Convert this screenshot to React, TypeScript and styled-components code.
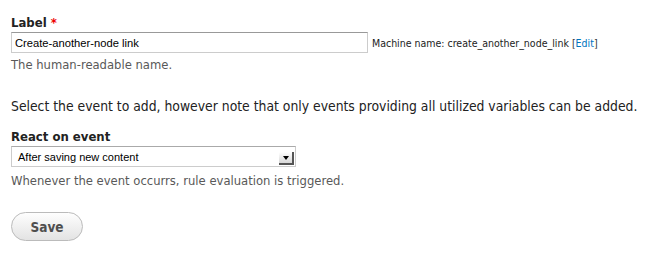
import React from "react";
import styled, { createGlobalStyle } from "styled-components";

const Global = createGlobalStyle`
  body { margin: 0; background: #fff; font-family: "DejaVu Sans Condensed", "DejaVu Sans", sans-serif; color: #333; }
`;

const Page = styled.div`
  padding: 14px 11px;
  display: flex;
  flex-direction: column;
`;

const FormItem = styled.div<{ $mb?: number }>`
  display: flex;
  flex-direction: column;
  margin-bottom: ${(p) => p.$mb ?? 0}px;
`;

const Label = styled.label`
  font-weight: bold;
  font-size: 13px;
  color: #222;
  height: 18px;
  line-height: 18px;
`;

const Req = styled.span`
  color: #e00;
`;

const Row = styled.div`
  display: flex;
  align-items: center;
  gap: 4px;
`;

const TextInput = styled.input`
  box-sizing: border-box;
  width: 357px;
  height: 21px;
  margin: 0;
  padding: 2px 3px;
  border: 1px solid #ccc;
  border-top-color: #999;
  font-family: "Liberation Sans", Arial, sans-serif;
  font-size: 11.2px;
  color: #000;
  outline: none;
`;

const Machine = styled.span`
  font-size: 10.5px;
  color: #222;
`;

const Bracket = styled.span`
  color: #333;
`;

const EditLink = styled.a`
  color: #0074bd;
  text-decoration: none;
`;

const Desc = styled.div<{ $mt: number }>`
  font-size: 12.9px;
  color: #595959;
  margin-top: ${(p) => p.$mt}px;
  line-height: 16px;
`;

const Para = styled.p`
  font-size: 13.8px;
  color: #222;
  margin: 0 0 13px 0;
  line-height: 17px;
`;

const SelectBox = styled.div`
  box-sizing: border-box;
  width: 285px;
  height: 21px;
  border: 1px solid #ccc;
  border-top-color: #aaa;
  display: flex;
  align-items: center;
  justify-content: space-between;
  padding: 0 1px 0 6px;
  font-family: "Liberation Sans", Arial, sans-serif;
  font-size: 11px;
  color: #000;
`;

const Arrow = styled.span`
  align-self: flex-end;
  margin-bottom: 1px;
  width: 15px;
  height: 13px;
  background: linear-gradient(#fff, #d8d8d8);
  border-right: 2px solid #555;
  border-bottom: 2px solid #555;
  display: flex;
  align-items: center;
  justify-content: center;
  box-sizing: border-box;
  &::after {
    content: "";
    border-left: 3px solid transparent;
    border-right: 3px solid transparent;
    border-top: 4px solid #000;
  }
`;

const Button = styled.button`
  width: 72px;
  height: 29px;
  border: 1px solid #bbb;
  border-radius: 15px;
  background: linear-gradient(#fefefe, #e3e3e3);
  font-family: inherit;
  font-size: 13.5px;
  font-weight: bold;
  color: #4f4f4f;
  padding: 0;
  cursor: pointer;
`;

export default function App() {
  return (
    <>
      <Global />
      <Page>
        <FormItem $mb={25}>
          <Label>
            Label <Req>*</Req>
          </Label>
          <Row>
            <TextInput defaultValue="Create-another-node link" />
            <Machine>
              Machine name: create_another_node_link <Bracket>[</Bracket>
              <EditLink href="#">Edit</EditLink>
              <Bracket>]</Bracket>
            </Machine>
          </Row>
          <Desc $mt={4}>The human-readable name.</Desc>
        </FormItem>
        <Para>Select the event to add, however note that only events providing all utilized variables can be added.</Para>
        <FormItem $mb={23}>
          <Label>React on event</Label>
          <SelectBox>
            <span>After saving new content</span>
            <Arrow />
          </SelectBox>
          <Desc $mt={6}>Whenever the event occurrs, rule evaluation is triggered.</Desc>
        </FormItem>
        <div>
          <Button>Save</Button>
        </div>
      </Page>
    </>
  );
}
